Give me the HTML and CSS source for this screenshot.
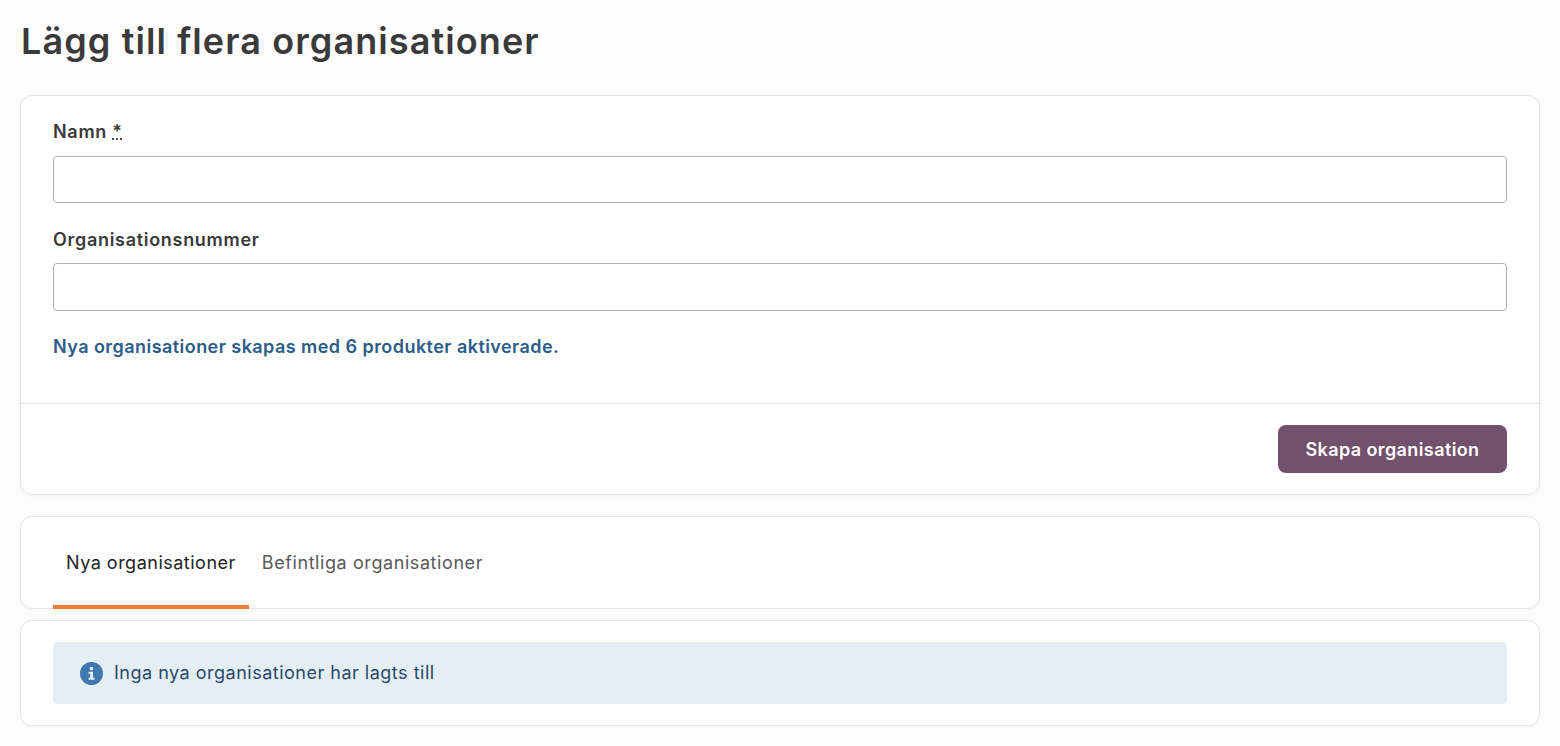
FILE: index.html
```html
<!DOCTYPE html>
<html lang="sv">
<head>
<meta charset="utf-8">
<title>Lägg till flera organisationer</title>
<link rel="stylesheet" href="styles.css">
</head>
<body>
<main class="page">
  <h1 class="title">Lägg till flera organisationer</h1>
  <section class="card form-card">
    <div class="form-body">
      <div class="field">
        <label class="label" for="namn">Namn <abbr class="req" title="obligatoriskt">*</abbr></label>
        <input class="input" id="namn" type="text">
      </div>
      <div class="field">
        <label class="label" for="orgnr">Organisationsnummer</label>
        <input class="input" id="orgnr" type="text">
      </div>
      <p class="note">Nya organisationer skapas med 6 produkter aktiverade.</p>
    </div>
    <div class="form-footer">
      <button class="btn" type="button">Skapa organisation</button>
    </div>
  </section>
  <nav class="card tabs">
    <a class="tab tab-active">Nya organisationer</a>
    <a class="tab">Befintliga organisationer</a>
  </nav>
  <section class="card list-card">
    <div class="alert">
      <svg class="alert-icon" viewBox="0 0 24 24" width="23" height="23" aria-hidden="true">
        <circle cx="12" cy="12" r="12" fill="#3f78b1"/>
        <circle cx="12" cy="6.9" r="1.9" fill="#e6eef5"/>
        <path d="M8.9 10.2h4.7v6.3h1.6v2.1H8.9v-2.1h1.7v-4.2H8.9z" fill="#e6eef5"/>
      </svg>
      <span class="alert-text">Inga nya organisationer har lagts till</span>
    </div>
  </section>
</main>
</body>
</html>
```
FILE: styles.css
```css
* { box-sizing: border-box; }
html, body { margin: 0; height: 100%; }
body {
  background: #fcfcfc;
  font-family: "Inter", "Lato", sans-serif;
  color: #3a3a3a;
  overflow: hidden;
}
.page { padding: 17px 20px 0; }
.title {
  margin: 0 0 30px;
  padding-left: 1px;
  font-size: 36px;
  line-height: 48px;
  font-weight: 600;
  letter-spacing: 1.1px;
  color: #3a3a3a;
}
.card {
  background: #fff;
  border: 1px solid #e6e6e6;
  border-radius: 12px;
  box-shadow: 0 1px 3px rgba(0, 0, 0, 0.04);
}
.form-card { height: 400px; margin-bottom: 21px; }
.form-body { height: 308px; padding: 25px 32px 0; border-bottom: 1px solid #e6e6e6; }
.field { margin-bottom: 26px; }
.label {
  display: block;
  font-size: 18px;
  line-height: 22px;
  font-weight: 600;
  letter-spacing: 0.7px;
  margin-bottom: 13px;
  color: #3a3a3a;
}
.field + .field .label { margin-bottom: 12px; }
.field + .field { margin-bottom: 25px; }
.req { text-decoration: underline dotted; }
.input {
  display: block;
  width: 100%;
  height: 47px;
  background: #fff;
  border: 1px solid #b3b3b3;
  border-radius: 4px;
}
.field + .field .input { height: 48px; }
.note {
  margin: 0;
  font-size: 18px;
  line-height: 22px;
  font-weight: 600;
  letter-spacing: 0.45px;
  color: #2c5c88;
}
.form-footer { display: flex; justify-content: flex-end; padding: 21px 32px 0; }
.btn {
  width: 229px;
  height: 48px;
  border: 0;
  border-radius: 8px;
  background: #72516c;
  color: #fff;
  font-family: inherit;
  font-size: 18px;
  font-weight: 600;
  letter-spacing: 0.4px;
}
.tabs {
  display: flex;
  height: 93px;
  margin-bottom: 11px;
  padding: 0 32px;
}
.tab {
  height: 92px;
  padding: 34px 13px 0;
  font-size: 18px;
  line-height: 24px;
  letter-spacing: 0.58px;
  color: #595959;
}
.tab-active {
  color: #222;
  border-bottom: 4px solid #f07a35;
  letter-spacing: 0.5px;
}
.list-card { height: 106px; padding: 21px 32px 0; }
.alert {
  display: flex;
  align-items: center;
  gap: 11px;
  height: 62px;
  padding-left: 27px;
  background: #e6eef5;
  border-radius: 4px;
  font-size: 18px;
  letter-spacing: 0.5px;
  color: #264a6b;
}
.alert-icon { flex: none; }
.alert-text { margin-top: -2px; }
```
